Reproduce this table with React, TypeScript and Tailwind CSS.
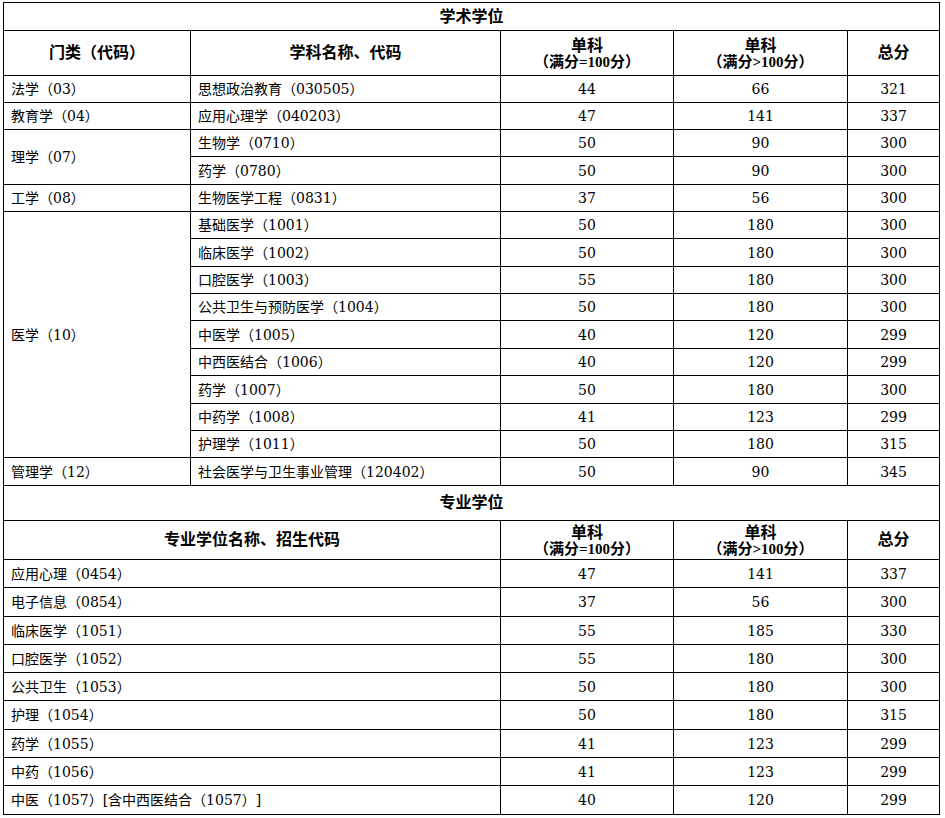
const font = { fontFamily: "'DejaVu Serif', 'Noto Sans CJK SC', serif" }

type Row = { name: string; a: string; b: string; t: string; h: number }

const academic: { cat: string; rows: Row[] }[] = [
  { cat: '法学（03）', rows: [{ name: '思想政治教育（030505）', a: '44', b: '66', t: '321', h: 27 }] },
  { cat: '教育学（04）', rows: [{ name: '应用心理学（040203）', a: '47', b: '141', t: '337', h: 27 }] },
  {
    cat: '理学（07）',
    rows: [
      { name: '生物学（0710）', a: '50', b: '90', t: '300', h: 27 },
      { name: '药学（0780）', a: '50', b: '90', t: '300', h: 28 },
    ],
  },
  { cat: '工学（08）', rows: [{ name: '生物医学工程（0831）', a: '37', b: '56', t: '300', h: 27 }] },
  {
    cat: '医学（10）',
    rows: [
      { name: '基础医学（1001）', a: '50', b: '180', t: '300', h: 27 },
      { name: '临床医学（1002）', a: '50', b: '180', t: '300', h: 28 },
      { name: '口腔医学（1003）', a: '55', b: '180', t: '300', h: 27 },
      { name: '公共卫生与预防医学（1004）', a: '50', b: '180', t: '300', h: 27 },
      { name: '中医学（1005）', a: '40', b: '120', t: '299', h: 28 },
      { name: '中西医结合（1006）', a: '40', b: '120', t: '299', h: 27 },
      { name: '药学（1007）', a: '50', b: '180', t: '300', h: 28 },
      { name: '中药学（1008）', a: '41', b: '123', t: '299', h: 27 },
      { name: '护理学（1011）', a: '50', b: '180', t: '315', h: 27 },
    ],
  },
  { cat: '管理学（12）', rows: [{ name: '社会医学与卫生事业管理（120402）', a: '50', b: '90', t: '345', h: 28 }] },
]

const professional: Row[] = [
  { name: '应用心理（0454）', a: '47', b: '141', t: '337', h: 28 },
  { name: '电子信息（0854）', a: '37', b: '56', t: '300', h: 29 },
  { name: '临床医学（1051）', a: '55', b: '185', t: '330', h: 28 },
  { name: '口腔医学（1052）', a: '55', b: '180', t: '300', h: 28 },
  { name: '公共卫生（1053）', a: '50', b: '180', t: '300', h: 28 },
  { name: '护理（1054）', a: '50', b: '180', t: '315', h: 29 },
  { name: '药学（1055）', a: '41', b: '123', t: '299', h: 28 },
  { name: '中药（1056）', a: '41', b: '123', t: '299', h: 28 },
  { name: '中医（1057）[含中西医结合（1057）]', a: '40', b: '120', t: '299', h: 29 },
]

const cell = 'border border-black px-[7px] py-0 leading-none align-middle whitespace-nowrap'
const head = { fontFamily: "'Liberation Serif', 'Noto Sans CJK SC', serif" }

function HeadScores() {
  return (
    <>
      <td className={`${cell} text-center font-bold`} style={head}>
        <div className="text-[16px] leading-[17px]">单科</div>
        <div className="text-[15px] leading-[16px]">（满分=100分）</div>
      </td>
      <td className={`${cell} text-center font-bold`} style={head}>
        <div className="text-[16px] leading-[17px]">单科</div>
        <div className="text-[15px] leading-[16px]">（满分&gt;100分）</div>
      </td>
      <td className={`${cell} text-center font-bold text-[16px]`}>总分</td>
    </>
  )
}

export default function App() {
  return (
    <div
      className="w-[945px] h-[818px] bg-white text-black pt-[2px] pl-[3px] [text-spacing-trim:space-all]"
      style={font}
    >
      <table className="border-collapse table-fixed w-[936px] text-[14px]">
        <colgroup>
          <col className="w-[187px]" />
          <col className="w-[310px]" />
          <col className="w-[173px]" />
          <col className="w-[174px]" />
          <col className="w-[92px]" />
        </colgroup>
        <tbody>
          <tr className="h-[28px]">
            <td colSpan={5} className={`${cell} text-center font-bold text-[16px]`}>学术学位</td>
          </tr>
          <tr className="h-[45px]">
            <td className={`${cell} text-center font-bold text-[16px]`}>门类（代码）</td>
            <td className={`${cell} text-center font-bold text-[16px]`}>学科名称、代码</td>
            <HeadScores />
          </tr>
          {academic.map((g) =>
            g.rows.map((r, i) => (
              <tr key={r.name} style={{ height: r.h }}>
                {i === 0 && (
                  <td rowSpan={g.rows.length} className={cell}>
                    {g.cat}
                  </td>
                )}
                <td className={cell}>{r.name}</td>
                <td className={`${cell} text-center`}>{r.a}</td>
                <td className={`${cell} text-center`}>{r.b}</td>
                <td className={`${cell} text-center`}>{r.t}</td>
              </tr>
            ))
          )}
          <tr className="h-[35px]">
            <td colSpan={5} className={`${cell} text-center font-bold text-[16px]`}>专业学位</td>
          </tr>
          <tr className="h-[39px]">
            <td colSpan={2} className={`${cell} text-center font-bold text-[16px]`}>专业学位名称、招生代码</td>
            <HeadScores />
          </tr>
          {professional.map((r) => (
            <tr key={r.name} style={{ height: r.h }}>
              <td colSpan={2} className={cell}>{r.name}</td>
              <td className={`${cell} text-center`}>{r.a}</td>
              <td className={`${cell} text-center`}>{r.b}</td>
              <td className={`${cell} text-center`}>{r.t}</td>
            </tr>
          ))}
        </tbody>
      </table>
    </div>
  )
}
